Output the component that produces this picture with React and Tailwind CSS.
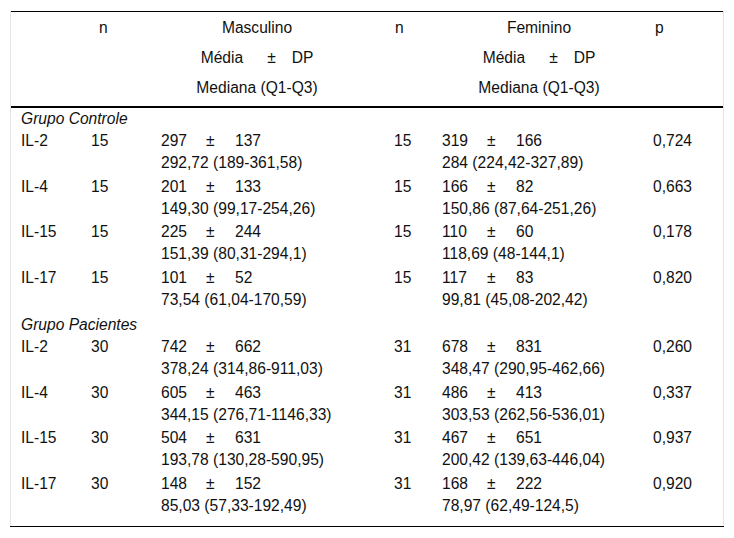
const groups = [
  {
    title: 'Grupo Controle',
    rows: [
      { label: 'IL-2', n1: 15, m: ['297', '137'], mMed: '292,72 (189-361,58)', n2: 15, f: ['319', '166'], fMed: '284 (224,42-327,89)', p: '0,724' },
      { label: 'IL-4', n1: 15, m: ['201', '133'], mMed: '149,30 (99,17-254,26)', n2: 15, f: ['166', '82'], fMed: '150,86 (87,64-251,26)', p: '0,663' },
      { label: 'IL-15', n1: 15, m: ['225', '244'], mMed: '151,39 (80,31-294,1)', n2: 15, f: ['110', '60'], fMed: '118,69 (48-144,1)', p: '0,178' },
      { label: 'IL-17', n1: 15, m: ['101', '52'], mMed: '73,54 (61,04-170,59)', n2: 15, f: ['117', '83'], fMed: '99,81 (45,08-202,42)', p: '0,820' },
    ],
  },
  {
    title: 'Grupo Pacientes',
    rows: [
      { label: 'IL-2', n1: 30, m: ['742', '662'], mMed: '378,24 (314,86-911,03)', n2: 31, f: ['678', '831'], fMed: '348,47 (290,95-462,66)', p: '0,260' },
      { label: 'IL-4', n1: 30, m: ['605', '463'], mMed: '344,15 (276,71-1146,33)', n2: 31, f: ['486', '413'], fMed: '303,53 (262,56-536,01)', p: '0,337' },
      { label: 'IL-15', n1: 30, m: ['504', '631'], mMed: '193,78 (130,28-590,95)', n2: 31, f: ['467', '651'], fMed: '200,42 (139,63-446,04)', p: '0,937' },
      { label: 'IL-17', n1: 30, m: ['148', '152'], mMed: '85,03 (57,33-192,49)', n2: 31, f: ['168', '222'], fMed: '78,97 (62,49-124,5)', p: '0,920' },
    ],
  },
];

const cols = 'grid grid-cols-[70px_70px_233px_48px_211px_1fr]';

function MeanSd({ values }) {
  return (
    <div className="flex">
      <span className="w-[45px]">{values[0]}</span>
      <span className="w-[29px]">±</span>
      <span>{values[1]}</span>
    </div>
  );
}

function HeaderBlock({ title }) {
  return (
    <div className="flex flex-col items-center">
      <span>{title}</span>
      <span>
        Média<span className="ml-[24px]">±</span>
        <span className="ml-[16px]">DP</span>
      </span>
      <span>Mediana (Q1-Q3)</span>
    </div>
  );
}

export default function App() {
  return (
    <div className="min-h-[538px] bg-white pt-[10px] font-['Liberation_Sans',Arial,sans-serif] text-[15.6px] text-[#111]">
      <div className="mx-[10px] w-[714px] border-x border-[#e4e4e4]">
        <div className={`${cols} mt-[1px] border-t border-black pl-[10px] pt-[1px] pb-[3px] leading-[30px] border-b-2`}>
          <div />
          <div className="pl-[8px]">n</div>
          <div className="w-[192px]">
            <HeaderBlock title="Masculino" />
          </div>
          <div className="pl-[1px]">n</div>
          <div className="w-[194px]">
            <HeaderBlock title="Feminino" />
          </div>
          <div className="pl-[2px]">p</div>
        </div>
        <div className="pl-[10px] pb-[8px] leading-[22px]">
          {groups.map((group, gi) => (
            <div key={group.title}>
              <div className={gi > 0 ? 'mt-[2px] italic' : 'italic'}>{group.title}</div>
              {group.rows.map((row) => (
                <div key={row.label} className={`${cols} pb-[1.5px]`}>
                  <div>{row.label}</div>
                  <div>{row.n1}</div>
                  <div>
                    <MeanSd values={row.m} />
                    <div>{row.mMed}</div>
                  </div>
                  <div>{row.n2}</div>
                  <div>
                    <MeanSd values={row.f} />
                    <div>{row.fMed}</div>
                  </div>
                  <div>{row.p}</div>
                </div>
              ))}
            </div>
          ))}
        </div>
      </div>
      <div className="mx-[10px] h-[1px] w-[714px] bg-black" />
    </div>
  );
}
